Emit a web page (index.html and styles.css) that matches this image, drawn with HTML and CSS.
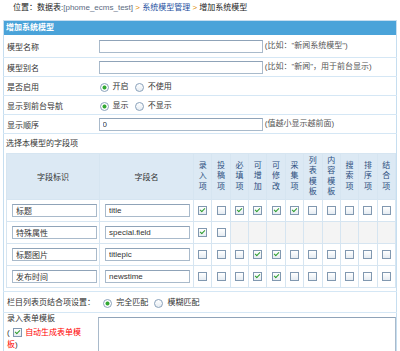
FILE: index.html
```html
<!DOCTYPE html>
<html lang="zh-CN">
<head>
    <meta charset="UTF-8">
    <meta name="viewport" content="width=device-width, initial-scale=1.0">
    <title>增加系统模型</title>
    <link rel="stylesheet" href="styles.css">
</head>
<body>
    <div class="crumb">位置：数据表:<span class="db">[phome_ecms_test]</span> <span class="arr">&gt;</span> <a href="#">系统模型管理</a> <span class="arr">&gt;</span> 增加系统模型</div>

    <table class="form">
        <colgroup><col class="c-label"><col></colgroup>
        <tr class="head"><td colspan="2">增加系统模型</td></tr>
        <tr class="first">
            <td class="label">模型名称</td>
            <td><input type="text" class="text"> <span class="hint">(比如："新闻系统模型")</span></td>
        </tr>
        <tr>
            <td class="label">模型别名</td>
            <td><input type="text" class="text"> <span class="hint">(比如："新闻"，用于前台显示)</span></td>
        </tr>
        <tr>
            <td class="label">是否启用</td>
            <td>
                <label class="opt"><input type="radio" name="usemod" checked>开启</label>
                <label class="opt"><input type="radio" name="usemod">不使用</label>
            </td>
        </tr>
        <tr>
            <td class="label">显示到前台导航</td>
            <td>
                <label class="opt"><input type="radio" name="showmod" checked>显示</label>
                <label class="opt"><input type="radio" name="showmod">不显示</label>
            </td>
        </tr>
        <tr>
            <td class="label">显示顺序</td>
            <td><input type="text" class="text order" value="0"> <span class="hint">(值越小显示越前面)</span></td>
        </tr>
        <tr>
            <td colspan="2" class="fields">
                <div class="sub">选择本模型的字段项</div>
                <table class="ftable">
                    <colgroup><col class="c-name"><col class="c-key"><col span="11"></colgroup>
                    <tr class="fhead">
                        <th class="h">字段标识</th>
                        <th class="h">字段名</th>
                        <th class="v"><span>录入项</span></th>
                        <th class="v"><span>投稿项</span></th>
                        <th class="v"><span>必填项</span></th>
                        <th class="v"><span>可增加</span></th>
                        <th class="v"><span>可修改</span></th>
                        <th class="v"><span>采集项</span></th>
                        <th class="v"><span>列表模板</span></th>
                        <th class="v"><span>内容模板</span></th>
                        <th class="v"><span>搜索项</span></th>
                        <th class="v"><span>排序项</span></th>
                        <th class="v"><span>结合项</span></th>
                    </tr>
                    <tr>
                        <td class="in"><input type="text" class="text small" value="标题"></td>
                        <td class="in"><input type="text" class="text small" value="title"></td>
                        <td><input type="checkbox" checked></td>
                        <td><input type="checkbox"></td>
                        <td><input type="checkbox" checked></td>
                        <td><input type="checkbox" checked></td>
                        <td><input type="checkbox" checked></td>
                        <td><input type="checkbox" checked></td>
                        <td><input type="checkbox"></td>
                        <td><input type="checkbox"></td>
                        <td><input type="checkbox"></td>
                        <td><input type="checkbox"></td>
                        <td><input type="checkbox"></td>
                    </tr>
                    <tr>
                        <td class="in"><input type="text" class="text small" value="特殊属性"></td>
                        <td class="in"><input type="text" class="text small" value="special.field"></td>
                        <td><input type="checkbox" checked></td>
                        <td><input type="checkbox"></td>
                        <td class="blank"></td>
                        <td class="blank"></td>
                        <td class="blank"></td>
                        <td class="blank"></td>
                        <td class="blank"></td>
                        <td class="blank"></td>
                        <td class="blank"></td>
                        <td class="blank"></td>
                        <td class="blank"></td>
                    </tr>
                    <tr>
                        <td class="in"><input type="text" class="text small" value="标题图片"></td>
                        <td class="in"><input type="text" class="text small" value="titlepic"></td>
                        <td><input type="checkbox"></td>
                        <td><input type="checkbox"></td>
                        <td><input type="checkbox"></td>
                        <td><input type="checkbox" checked></td>
                        <td><input type="checkbox" checked></td>
                        <td><input type="checkbox"></td>
                        <td><input type="checkbox"></td>
                        <td><input type="checkbox"></td>
                        <td><input type="checkbox"></td>
                        <td><input type="checkbox"></td>
                        <td><input type="checkbox"></td>
                    </tr>
                    <tr>
                        <td class="in"><input type="text" class="text small" value="发布时间"></td>
                        <td class="in"><input type="text" class="text small" value="newstime"></td>
                        <td><input type="checkbox"></td>
                        <td><input type="checkbox"></td>
                        <td><input type="checkbox"></td>
                        <td><input type="checkbox" checked></td>
                        <td><input type="checkbox" checked></td>
                        <td><input type="checkbox"></td>
                        <td><input type="checkbox"></td>
                        <td><input type="checkbox"></td>
                        <td><input type="checkbox"></td>
                        <td><input type="checkbox"></td>
                        <td><input type="checkbox"></td>
                    </tr>
                </table>
            </td>
        </tr>
        <tr>
            <td colspan="2" class="join">栏目列表页结合项设置：
                <label class="opt"><input type="radio" name="joinmode" checked>完全匹配</label>
                <label class="opt"><input type="radio" name="joinmode">模糊匹配</label>
            </td>
        </tr>
        <tr class="tpl">
            <td class="label">
                <div class="tpl-title">录入表单模板</div>
                <div class="auto">( <input type="checkbox" checked> <span class="red">自动生成表单模</span><span class="red">板</span>)</div>
            </td>
            <td><textarea></textarea></td>
        </tr>
    </table>
</body>
</html>
```

FILE: styles.css
```css
body {
    margin: 0;
    font-family: "Liberation Sans", "Noto Sans CJK SC", sans-serif;
    font-size: 8px;
    color: #333;
    background: #fff;
}
.crumb {
    height: 20px;
    line-height: 15px;
    padding-left: 13px;
    color: #222;
}
.crumb .db {
    color: #5b6b82;
}
.crumb .arr {
    color: #e08a00;
}
.crumb a {
    color: #1c4fa0;
    text-decoration: none;
}
.form {
    width: 394px;
    margin-left: 3px;
    border-collapse: collapse;
    table-layout: fixed;
    border: 1px solid #c6def0;
}
.form .c-label {
    width: 92px;
}
.form > tbody > tr > td {
    border-bottom: 1px solid #d5e7f5;
    padding: 0 3px;
    height: 18px;
    vertical-align: middle;
}
.form > tbody > tr.head > td {
    background: #4aa3d9;
    color: #fff;
    font-weight: bold;
    height: 14px;
    line-height: 14px;
    padding: 0 2px;
    border-bottom: 0;
}
.form > tbody > tr.first > td {
    height: 22px;
}
input.text {
    width: 164px;
    height: 13px;
    box-sizing: border-box;
    border: 1px solid #a9bacb;
    border-top-color: #8fa3b8;
    padding: 0 3px;
    margin: 0;
    font: inherit;
    color: #333;
    vertical-align: middle;
}
input.small {
    width: 85px;
}
.hint {
    color: #555;
}
.order {
    color: #6a2c6a;
}
.opt {
    margin-right: 3px;
}
input[type=radio] {
    appearance: none;
    width: 9px;
    height: 9px;
    box-sizing: border-box;
    border: 1px solid #8aa2bb;
    border-radius: 50%;
    background: linear-gradient(#fff, #e6ecf2);
    margin: 0 4px 0 1px;
    vertical-align: middle;
}
input[type=radio]:checked {
    background: radial-gradient(circle, #32a832 0, #32a832 1.6px, #fff 2.4px);
}
input[type=checkbox] {
    appearance: none;
    position: relative;
    width: 9px;
    height: 9px;
    box-sizing: border-box;
    border: 1px solid #8198b0;
    background: linear-gradient(#fff, #e6ecf2);
    margin: 0;
    vertical-align: middle;
}
input[type=checkbox]:checked::after {
    content: "";
    position: absolute;
    left: 2px;
    top: 0;
    width: 2px;
    height: 4px;
    border: solid #2f9e2f;
    border-width: 0 1.5px 1.5px 0;
    transform: rotate(45deg);
}
.form > tbody > tr > td.fields {
    padding: 4px 2px 3px 2px;
}
.sub {
    line-height: 11px;
}
.ftable {
    width: 390px;
    margin-top: 4px;
    border-collapse: collapse;
    table-layout: fixed;
}
.ftable .c-name {
    width: 93px;
}
.ftable .c-key {
    width: 94px;
}
.ftable th,
.ftable td {
    border: 1px solid #d6e5f1;
    padding: 0;
    text-align: center;
}
.ftable th {
    background: #dce9f4;
    height: 45px;
    font-weight: normal;
}
.ftable th.h {
    color: #333;
}
.ftable th.v {
    color: #2c4f80;
}
.ftable th.v span {
    display: block;
    width: 8px;
    margin: 0 auto;
    line-height: 10.5px;
}
.ftable td {
    height: 21px;
}
.ftable td.in {
    text-align: left;
    padding-left: 5px;
}
.ftable td.blank {
    background: #f4f4f4;
}
.form > tbody > tr > td.join {
    height: 20px;
}
.join .opt:first-child {
    margin-left: 5px;
}
.form > tbody > tr.tpl > td {
    vertical-align: top;
    border-bottom: 0;
    padding-top: 0;
}
.tpl-title {
    line-height: 12px;
}
.auto {
    width: 80px;
    margin-top: 2px;
    line-height: 12px;
}
.auto input {
    margin: 0 1px;
}
.red {
    color: #f00;
}
textarea {
    display: block;
    width: 298px;
    height: 80px;
    box-sizing: border-box;
    margin: 4px 0 0 -1px;
    border: 1px solid #a9bacb;
    border-top-color: #8fa3b8;
    resize: none;
}
```
